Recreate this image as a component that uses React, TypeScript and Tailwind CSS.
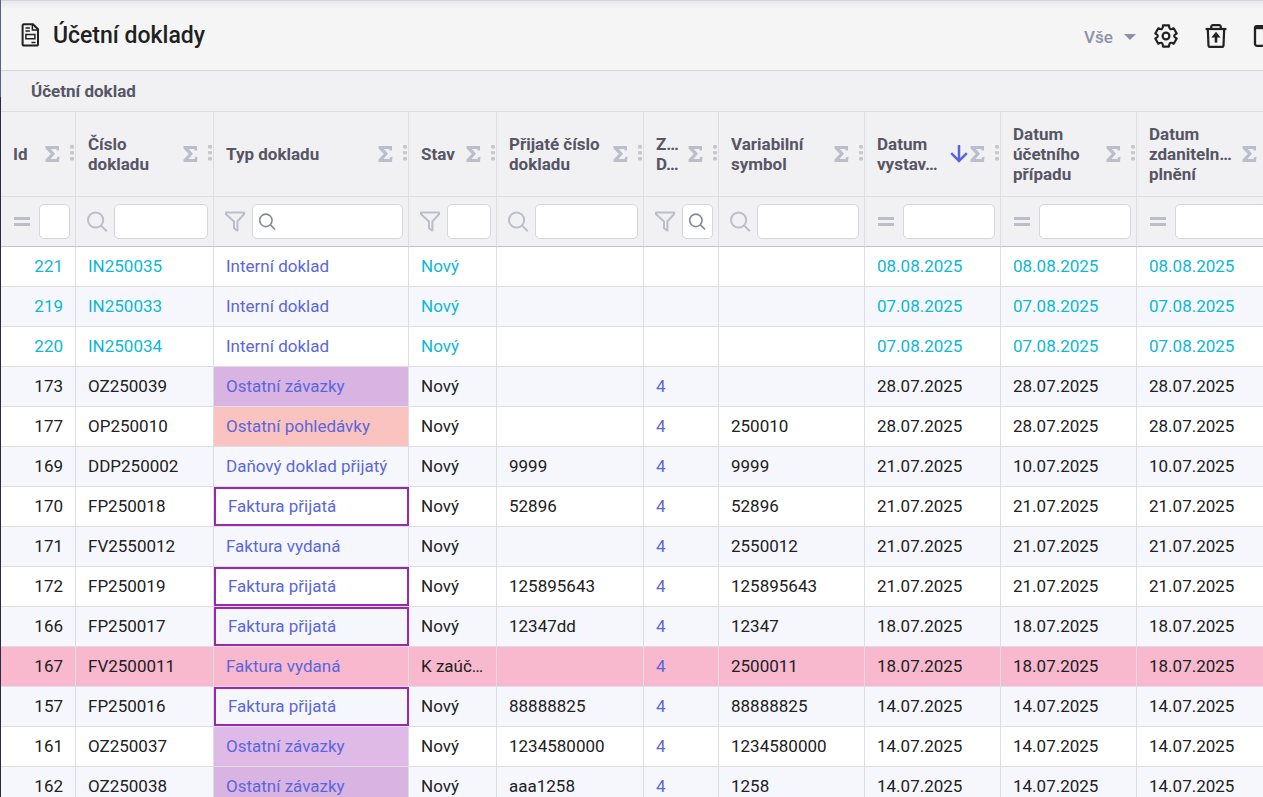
import type { ReactNode } from 'react';
import { clsx } from 'clsx';

type FilterKind = 'equals' | 'search' | 'funnel';

interface Column {
  id: string;
  label: string[];
  width: string;
  filter: FilterKind;
  lookup?: boolean;
  sorted?: boolean;
}

interface DocumentRow {
  id: number;
  number: string;
  type: string;
  state: string;
  received: string;
  variable: string;
  issued: string;
  booked: string;
  taxed: string;
  look?: 'draft' | 'warning';
}

const columns: Column[] = [
  { id: 'id', label: ['Id'], width: 'w-[75px]', filter: 'equals' },
  { id: 'number', label: ['Číslo', 'dokladu'], width: 'w-[138px]', filter: 'search' },
  { id: 'type', label: ['Typ dokladu'], width: 'w-[195px]', filter: 'funnel', lookup: true },
  { id: 'state', label: ['Stav'], width: 'w-[88px]', filter: 'funnel' },
  { id: 'received', label: ['Přijaté číslo', 'dokladu'], width: 'w-[147px]', filter: 'search' },
  { id: 'link', label: ['Z…', 'D…'], width: 'w-[75px]', filter: 'funnel', lookup: true },
  { id: 'variable', label: ['Variabilní', 'symbol'], width: 'w-[146px]', filter: 'search' },
  { id: 'issued', label: ['Datum', 'vystav…'], width: 'w-[136px]', filter: 'equals', sorted: true },
  { id: 'booked', label: ['Datum', 'účetního', 'případu'], width: 'w-[136px]', filter: 'equals' },
  { id: 'taxed', label: ['Datum', 'zdaniteln…', 'plnění'], width: 'w-[136px]', filter: 'equals' },
];

const rows: DocumentRow[] = [
  { id: 221, number: 'IN250035', type: 'Interní doklad', state: 'Nový', received: '', variable: '', issued: '08.08.2025', booked: '08.08.2025', taxed: '08.08.2025', look: 'draft' },
  { id: 219, number: 'IN250033', type: 'Interní doklad', state: 'Nový', received: '', variable: '', issued: '07.08.2025', booked: '07.08.2025', taxed: '07.08.2025', look: 'draft' },
  { id: 220, number: 'IN250034', type: 'Interní doklad', state: 'Nový', received: '', variable: '', issued: '07.08.2025', booked: '07.08.2025', taxed: '07.08.2025', look: 'draft' },
  { id: 173, number: 'OZ250039', type: 'Ostatní závazky', state: 'Nový', received: '', variable: '', issued: '28.07.2025', booked: '28.07.2025', taxed: '28.07.2025' },
  { id: 177, number: 'OP250010', type: 'Ostatní pohledávky', state: 'Nový', received: '', variable: '250010', issued: '28.07.2025', booked: '28.07.2025', taxed: '28.07.2025' },
  { id: 169, number: 'DDP250002', type: 'Daňový doklad přijatý', state: 'Nový', received: '9999', variable: '9999', issued: '21.07.2025', booked: '10.07.2025', taxed: '10.07.2025' },
  { id: 170, number: 'FP250018', type: 'Faktura přijatá', state: 'Nový', received: '52896', variable: '52896', issued: '21.07.2025', booked: '21.07.2025', taxed: '21.07.2025' },
  { id: 171, number: 'FV2550012', type: 'Faktura vydaná', state: 'Nový', received: '', variable: '2550012', issued: '21.07.2025', booked: '21.07.2025', taxed: '21.07.2025' },
  { id: 172, number: 'FP250019', type: 'Faktura přijatá', state: 'Nový', received: '125895643', variable: '125895643', issued: '21.07.2025', booked: '21.07.2025', taxed: '21.07.2025' },
  { id: 166, number: 'FP250017', type: 'Faktura přijatá', state: 'Nový', received: '12347dd', variable: '12347', issued: '18.07.2025', booked: '18.07.2025', taxed: '18.07.2025' },
  { id: 167, number: 'FV2500011', type: 'Faktura vydaná', state: 'K zaúč…', received: '', variable: '2500011', issued: '18.07.2025', booked: '18.07.2025', taxed: '18.07.2025', look: 'warning' },
  { id: 157, number: 'FP250016', type: 'Faktura přijatá', state: 'Nový', received: '88888825', variable: '88888825', issued: '14.07.2025', booked: '14.07.2025', taxed: '14.07.2025' },
  { id: 161, number: 'OZ250037', type: 'Ostatní závazky', state: 'Nový', received: '1234580000', variable: '1234580000', issued: '14.07.2025', booked: '14.07.2025', taxed: '14.07.2025' },
  { id: 162, number: 'OZ250038', type: 'Ostatní závazky', state: 'Nový', received: 'aaa1258', variable: '1258', issued: '14.07.2025', booked: '14.07.2025', taxed: '14.07.2025' },
];

export default function App() {
  return (
    <div className="flex h-screen overflow-hidden bg-white font-[Roboto,sans-serif] text-[#212121]">
      {/* edge of the collapsed side menu */}
      <div className="flex w-px shrink-0 flex-col">
        <div className="h-[97px] bg-[#5b6180]" />
        <div className="grow bg-[#2b2b40]" />
      </div>
      <main className="min-w-0 grow overflow-hidden">
        <Toolbar />
        <DocumentTable />
      </main>
    </div>
  );
}

function Toolbar() {
  return (
    <header className="flex h-[71px] items-center border-t border-b border-[#d3d3da] bg-[#f5f5f5] bg-linear-to-b from-[#e9e9ec] to-[#f5f5f5] to-[8px] pl-5">
      <DocumentIcon />
      <h1 className="ml-[13px] grow text-[23px] leading-7 font-medium">Účetní doklady</h1>
      <div className="flex shrink-0 items-center">
        <label className="relative flex items-center pt-0.5 text-[#8e90a6]">
          <select
            aria-label="Vše"
            className="w-14 appearance-none bg-transparent text-[17px] leading-6 font-medium outline-none"
          >
            <option>Vše</option>
          </select>
          <svg className="pointer-events-none absolute right-1 h-[6px] w-3" viewBox="0 0 12 6" fill="currentColor">
            <path d="M0 0h12L6 6z" />
          </svg>
        </label>
        <button type="button" aria-label="Nastavení" className="ml-3">
          <GearIcon />
        </button>
        <button type="button" aria-label="Obnovit" className="ml-[22px]">
          <RestoreIcon />
        </button>
        <button type="button" aria-label="Zobrazení" className="-mr-[17px] ml-[22px]">
          <svg className="size-7" viewBox="0 0 28 28" fill="none" stroke="currentColor">
            <rect x="3" y="4.2" width="22" height="19.6" rx="2" strokeWidth="2.3" />
            <path d="M3 5.5h22" strokeWidth="3.4" />
          </svg>
        </button>
      </div>
    </header>
  );
}

function DocumentTable() {
  return (
    <table className="w-full min-w-[1272px] table-fixed border-separate border-spacing-0 text-[17px] leading-5">
      <colgroup>
        {columns.map((column) => (
          <col key={column.id} className={column.width} />
        ))}
      </colgroup>
      <thead className="bg-[#f1f1f4] text-[#565664]">
        <tr>
          <th colSpan={columns.length} className="h-[41px] border-b border-[#dedee2] pl-[30px] text-left font-bold">
            Účetní doklad
          </th>
        </tr>
        <tr>
          {columns.map((column) => (
            <HeaderCell key={column.id} column={column} />
          ))}
        </tr>
        <tr>
          {columns.map((column) => (
            <FilterCell key={column.id} column={column} />
          ))}
        </tr>
      </thead>
      <tbody>
        {rows.map((row) => (
          <Row key={row.id} row={row} />
        ))}
      </tbody>
    </table>
  );
}

function HeaderCell({ column }: { column: Column }) {
  return (
    <th className="h-[85px] border-r border-b border-[#dedee2] p-0 text-left font-bold">
      <div className="flex items-center pr-px pl-3">
        <span className="min-w-0 grow whitespace-nowrap">
          {column.label.map((line) => (
            <span key={line} className="block">{line}</span>
          ))}
        </span>
        {column.sorted && (
          <svg className="mr-[2px] h-5 w-[18px] shrink-0 text-[#5764e0]" viewBox="0 0 18 20" fill="none" stroke="currentColor" strokeWidth="2.5">
            <path d="M9 1v16M1.2 9.2 9 17l7.8-7.8" />
          </svg>
        )}
        <svg className="mr-[10px] h-4 w-[15px] shrink-0 text-[#bbbdc9]" viewBox="0 0 15 16" fill="currentColor">
          <path d="M.5 0H14v4.6h-2.2L11.300 3H5.800l4.200 4.800L5.400 13h6.100l.8-2.200h2.200L14 16H.5v-2.400L5.800 8 .5 2.400z" />
        </svg>
        <svg className="h-[18px] w-1 shrink-0 text-[#c6c7cc]" viewBox="0 0 4 18" fill="currentColor">
          <rect width="4" height="3.4" rx="1" />
          <rect y="6" width="4" height="3.4" rx="1" />
          <rect y="12" width="4" height="3.4" rx="1" />
        </svg>
      </div>
    </th>
  );
}

function FilterCell({ column }: { column: Column }) {
  return (
    <td className="h-[50px] border-r border-b border-r-[#dedee2] border-b-[#c4c4c8] p-0">
      <div className="flex items-center gap-1 pr-[5px] pl-2">
        <button type="button" aria-label="Filtr" className="flex w-[26px] shrink-0 justify-center text-[#bbbdc9]">
          <FilterIcon kind={column.filter} />
        </button>
        <label className="relative flex min-w-0 grow items-center">
          <input
            type="text"
            aria-label={column.label.join(' ')}
            className="h-[35px] w-full min-w-0 rounded-[5px] border border-[#d5d5dc] bg-white px-2 outline-none"
          />
          {column.lookup && (
            <span className="pointer-events-none absolute left-[6px] text-[#858a9a]">
              <Magnifier className="size-[18px]" />
            </span>
          )}
        </label>
      </div>
    </td>
  );
}

function FilterIcon({ kind }: { kind: FilterKind }) {
  if (kind === 'search') return <Magnifier className="size-[22px]" />;
  if (kind === 'funnel') {
    return (
      <svg className="size-[22px]" viewBox="0 0 22 22" fill="none" stroke="currentColor" strokeWidth="2" strokeLinejoin="round">
        <path d="M2 1.6h18v1.600l-6.600 7.200V19.600l-3.400-2.400v-6.800L2 3.200z" />
      </svg>
    );
  }
  return (
    <svg className="h-[22px] w-4" viewBox="0 0 16 22" fill="currentColor">
      <path d="M0 6h16v3H0zM0 12h16v3H0z" />
    </svg>
  );
}

function Magnifier({ className }: { className: string }) {
  return (
    <svg className={className} viewBox="0 0 22 22" fill="none" stroke="currentColor" strokeWidth="2">
      <circle cx="9.6" cy="9" r="7.6" />
      <path d="m15.2 14.6 5.600 5.600" />
    </svg>
  );
}

function Row({ row }: { row: DocumentRow }) {
  // the link column stays empty for internal documents
  const link = row.look === 'draft' ? '' : '4';
  return (
    <tr
      className={clsx(
        'group',
        row.look === 'warning' ? 'bg-[#f8b8ce]' : 'odd:bg-white even:bg-[#f6f7fc]',
        row.look === 'draft' && 'text-[#0cb8d3]',
      )}
    >
      <Cell className="pr-3 text-right">{row.id}</Cell>
      <Cell>{row.number}</Cell>
      <TypeCell type={row.type} />
      <Cell>{row.state}</Cell>
      <Cell>{row.received}</Cell>
      <Cell>{link && <a href="#" className="text-[#5a67dc]">{link}</a>}</Cell>
      <Cell>{row.variable}</Cell>
      <Cell>{row.issued}</Cell>
      <Cell>{row.booked}</Cell>
      <Cell>{row.taxed}</Cell>
    </tr>
  );
}

function Cell({ className, children }: { className?: string; children: ReactNode }) {
  return (
    <td className={clsx('h-10 border-r border-b border-[#dedee2] pt-0 pb-px pl-3 whitespace-nowrap', className)}>
      {children}
    </td>
  );
}

function TypeCell({ type }: { type: string }) {
  return (
    <td
      className={clsx(
        'h-10 border-r border-b border-[#dedee2] p-0 whitespace-nowrap',
        type === 'Ostatní závazky' && 'bg-[#dfbae6] group-even:bg-[#d9b4e3]',
        type === 'Ostatní pohledávky' && 'bg-[#fbc3bf]',
      )}
    >
      <div
        className={clsx(
          'flex h-[39px] items-center pb-px pl-3',
          type === 'Faktura přijatá' && '-mr-px border-2 border-[#9c27b0]',
        )}
      >
        <a href="#" className="text-[#5a67dc]">{type}</a>
      </div>
    </td>
  );
}

function DocumentIcon() {
  return (
    <svg className="h-[26px] w-[19px] shrink-0" viewBox="0 0 19 26" fill="none" stroke="currentColor">
      <path d="M3 1.2h9l5 5V21.200a1.400 1.400 0 0 1-1.400 1.400H3a1.400 1.400 0 0 1-1.400-1.400V2.600A1.400 1.400 0 0 1 3 1.200z" strokeWidth="2" />
      <path d="M11.400 1.500v5.500h5.500" strokeWidth="1.500" />
      <path d="M4.500 5h4.400M4.500 8h4.400M10.500 19.500h4" strokeWidth="1.300" />
      <path d="M4.900 11.500h9v4.300h-9z" strokeWidth="1.500" />
    </svg>
  );
}

function GearIcon() {
  return (
    <svg className="size-7" viewBox="0 0 28 28" fill="none" stroke="currentColor" strokeWidth="2.2" strokeLinejoin="round">
      <path d="M11 3.400H17Q17 9.150 21.700 6.300L24.700 11.500Q19.600 14 24.700 16.500L21.700 21.700Q17 18.850 17 24.600H11Q11 18.850 6.300 21.700L3.300 16.500Q8.400 14 3.300 11.500L6.300 6.300Q11 9.150 11 3.400z" />
      <circle cx="14" cy="14" r="3.400" />
    </svg>
  );
}

function RestoreIcon() {
  return (
    <svg className="size-7" viewBox="0 0 28 28" fill="none" stroke="currentColor" strokeWidth="2.2">
      <path d="M3.600 7h20.800" />
      <path d="M9.200 6.600V4.800a1.600 1.600 0 0 1 1.600-1.600h6.400a1.600 1.600 0 0 1 1.600 1.600v1.800" />
      <path d="m5.800 7 .7 16.600a1.300 1.300 0 0 0 1.300 1.200h12.400a1.300 1.300 0 0 0 1.300-1.200L22.200 7" />
      <path d="M14 20.600v-7" strokeWidth="2.6" />
      <path d="M14 9.800 9.400 15.400h9.200z" fill="currentColor" stroke="none" />
    </svg>
  );
}
